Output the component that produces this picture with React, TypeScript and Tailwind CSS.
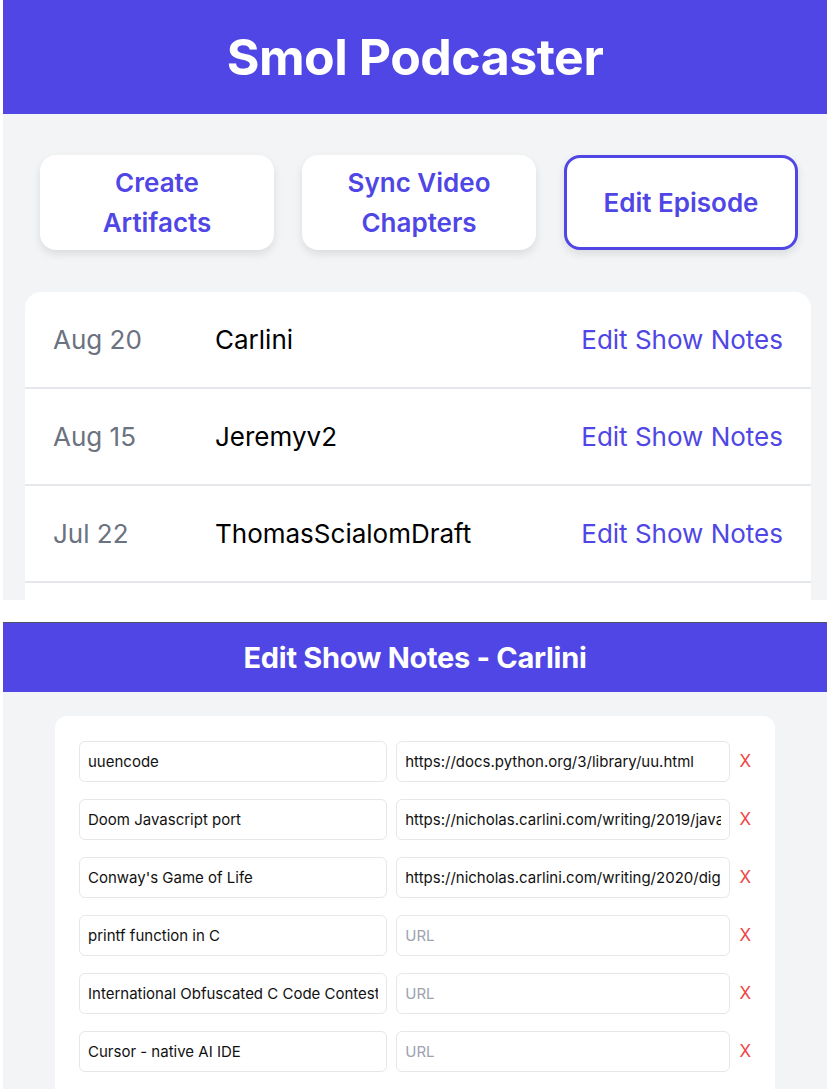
import React from "react";

const font = { fontFamily: "Inter, 'Noto Sans', sans-serif" };

interface Episode {
  date: string;
  name: string;
}

const episodes: Episode[] = [
  { date: "Aug 20", name: "Carlini" },
  { date: "Aug 15", name: "Jeremyv2" },
  { date: "Jul 22", name: "ThomasScialomDraft" },
  { date: "", name: "" },
];

const links = [
  { title: "uuencode", url: "https://docs.python.org/3/library/uu.html" },
  { title: "Doom Javascript port", url: "https://nicholas.carlini.com/writing/2019/javascript-doom-clone" },
  { title: "Conway's Game of Life", url: "https://nicholas.carlini.com/writing/2020/digital-logic-game-of-life" },
  { title: "printf function in C", url: "" },
  { title: "International Obfuscated C Code Contest", url: "" },
  { title: "Cursor - native AI IDE", url: "" },
];

function NavButton({ label, active }: { label: React.ReactNode; active?: boolean }) {
  return (
    <div
      className={
        "flex h-[95px] w-[234px] items-center justify-center rounded-2xl bg-white text-center text-[26px] leading-[40px] font-semibold text-[#4f46e5] shadow-[0_4px_8px_rgba(0,0,0,0.1)] " +
        (active ? "border-[3px] border-[#4f46e5]" : "")
      }
    >
      {label}
    </div>
  );
}

export default function App() {
  return (
    <div className="h-[1089px] overflow-hidden bg-white pl-[3px]" style={font}>
      {/* Main screen */}
      <div className="flex h-[600px] flex-col overflow-hidden bg-[#f3f4f6]">
        <header className="flex h-[114px] shrink-0 items-center justify-center bg-[#4f46e5]">
          <h1 className="text-[50px] font-bold tracking-[-0.5px] text-white">Smol Podcaster</h1>
        </header>

        <div className="mt-[41px] flex gap-[28px] pl-[37px]">
          <NavButton label={<>Create<br />Artifacts</>} />
          <NavButton label={<>Sync Video<br />Chapters</>} />
          <NavButton label="Edit Episode" active />
        </div>

        <div className="mt-[42px] ml-[22px] w-[786px] rounded-t-2xl bg-white">
          {episodes.map((ep, i) => (
            <div
              key={i}
              className="flex h-[97px] items-center border-b-2 border-[#e5e7eb] px-[28px] text-[26px]"
            >
              <span className="w-[162px] text-[#6b7280]">{ep.date}</span>
              <span className="flex-1 text-black">{ep.name}</span>
              {ep.name && <span className="text-[#4f46e5]">Edit Show Notes</span>}
            </div>
          ))}
        </div>
      </div>

      <div className="h-[22px] bg-white" />

      {/* Edit show notes screen */}
      <div className="h-[467px] overflow-hidden border-t border-[#4b5563] bg-[#f3f4f6]">
        <header className="flex h-[69px] items-center justify-center bg-[#4f46e5]">
          <h2 className="text-[29px] font-bold tracking-[-0.3px] text-white">Edit Show Notes - Carlini</h2>
        </header>

        <div className="mt-[24px] ml-[52px] w-[720px] rounded-xl bg-white px-[24px] pt-[25px] pb-[60px]">
          <div className="flex flex-col gap-[17px]">
            {links.map((link, i) => (
              <div key={i} className="flex items-center">
                <input
                  readOnly
                  value={link.title}
                  className="h-[41px] w-[309px] rounded-md border border-[#e5e7eb] px-[8px] text-[15px] text-[#111] outline-none"
                  style={font}
                />
                <input
                  readOnly
                  value={link.url}
                  placeholder="URL"
                  className="ml-[9px] h-[41px] w-[335px] rounded-md border border-[#e5e7eb] px-[8px] text-[15px] text-[#111] outline-none placeholder:text-[#9ca3af]"
                  style={font}
                />
                <span className="ml-[9px] text-[17px] text-[#ef4444]">X</span>
              </div>
            ))}
          </div>
        </div>
      </div>
    </div>
  );
}
